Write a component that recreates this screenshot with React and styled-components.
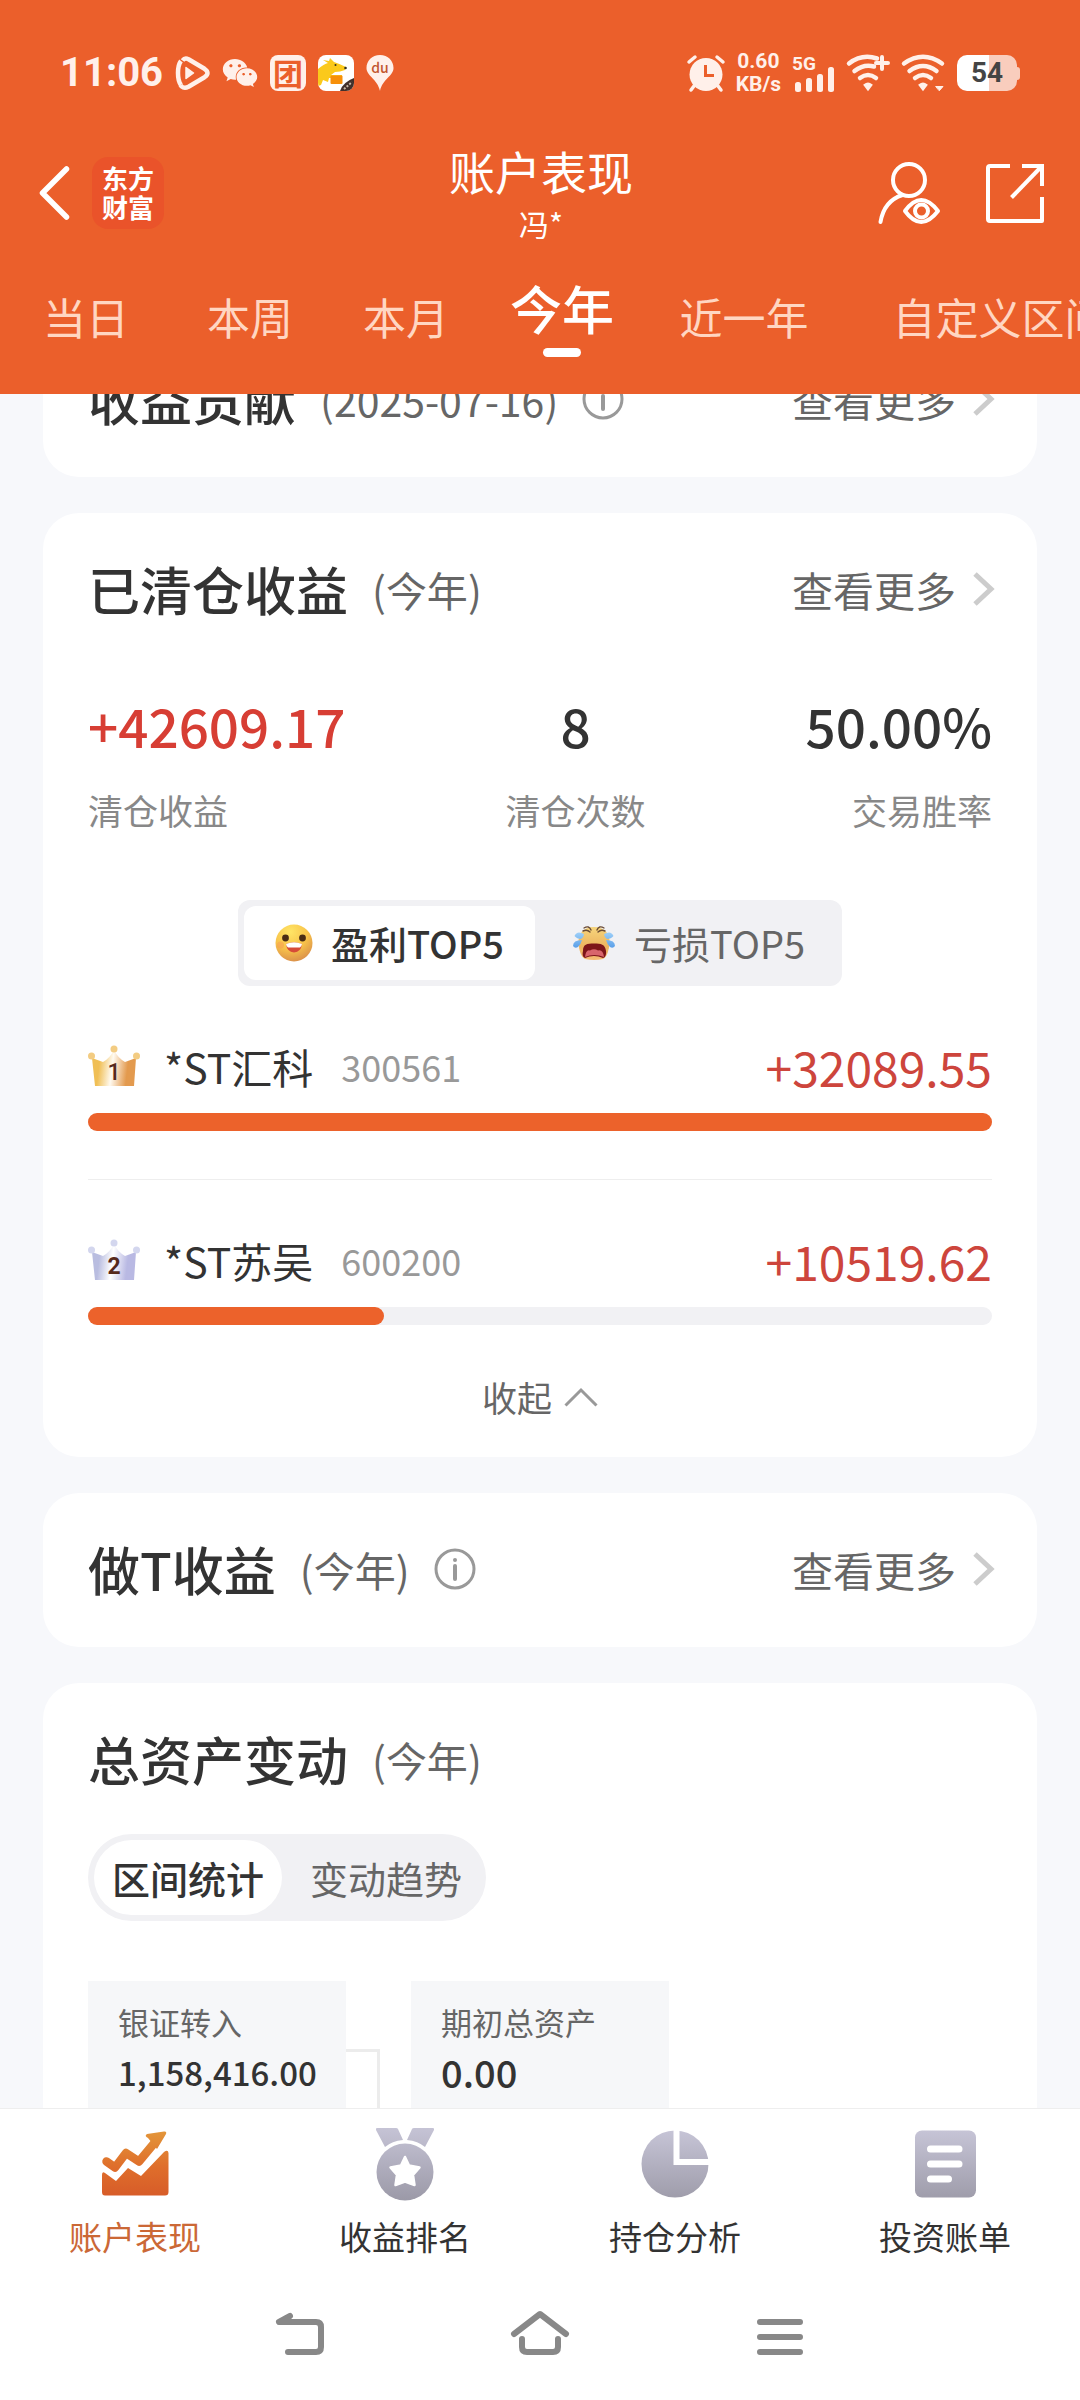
import React, { useState } from "react";
import styled, { createGlobalStyle } from "styled-components";
import { FaWeixin } from "react-icons/fa";

const GlobalStyle = createGlobalStyle`
  * { box-sizing: border-box; }
  body {
    margin: 0;
    background: #f7f8fb;
    color: #333;
    font-family: "Noto Sans CJK SC", "Noto Sans", sans-serif;
  }
  button {
    margin: 0;
    padding: 0;
    border: 0;
    background: none;
    color: inherit;
    font: inherit;
    cursor: pointer;
  }
  a { color: inherit; text-decoration: none; }
  svg { display: block; flex: none; overflow: visible; }
  h1, h2, p, dl, dt, dd, ul, li { margin: 0; padding: 0; font-weight: inherit; list-style: none; }
`;

const NUMERIC = `font-family: Roboto, "Noto Sans CJK SC", sans-serif;`;

const Page = styled.div`
  display: flex;
  flex-direction: column;
  height: 100vh;
`;

/* ---------- header ---------- */

const Header = styled.header`
  flex: none;
  background: #eb5f2b;
  color: #fff;
`;

const StatusBar = styled.div`
  display: flex;
  align-items: center;
  justify-content: space-between;
  height: 138px;
  padding: 8px 60px 0;
  color: #fff0ea;
`;

const StatusGroup = styled.div`
  display: flex;
  align-items: center;
  gap: ${(p) => p.$gap}px;
`;

const Clock = styled.span`
  ${NUMERIC}
  font-size: 40px;
  line-height: 62px;
  font-weight: 700;
`;

const TuanBadge = styled.span`
  width: 36px;
  height: 36px;
  border-radius: 8px;
  background: #fff0ea;
  color: #eb5f2b;
  font-size: 30px;
  line-height: 34px;
  font-weight: 700;
  text-align: center;
`;

const Speed = styled.span`
  ${NUMERIC}
  font-size: 21px;
  line-height: 23px;
  font-weight: 700;
  text-align: center;
`;

const BatteryWrap = styled.span`
  display: flex;
  align-items: center;
`;

const Battery = styled.span`
  ${NUMERIC}
  width: 60px;
  height: 36px;
  border-radius: 10px;
  background: linear-gradient(90deg, #fff 54%, #f9cdbd 54%);
  color: #444;
  font-size: 28px;
  line-height: 36px;
  font-weight: 700;
  text-align: center;
`;

const BatteryCap = styled.span`
  width: 3px;
  height: 13px;
  border-radius: 0 3px 3px 0;
  background: #f9cdbd;
`;

const TitleBar = styled.div`
  display: grid;
  grid-template-columns: 1fr auto 1fr;
  align-items: center;
  height: 110px;
  padding: 0 36px 0 38px;
`;

const TitleSide = styled.div`
  display: flex;
  align-items: center;
  justify-content: ${(p) => (p.$end ? "flex-end" : "flex-start")};
  gap: ${(p) => (p.$end ? 46 : 22)}px;
`;

const Brand = styled.span`
  width: 72px;
  height: 72px;
  padding-top: 6px;
  border-radius: 16px;
  background: #ea532a;
  font-size: 26px;
  line-height: 29px;
  font-weight: 700;
  text-align: center;
`;

const TitleBlock = styled.div`
  text-align: center;
`;

const PageTitle = styled.h1`
  font-size: 46px;
  line-height: 60px;
`;

const Owner = styled.p`
  font-size: 30px;
  line-height: 46px;
`;

const Tabs = styled.nav`
  display: grid;
  grid-template-columns: 172px repeat(3, 156px) 208px 304px;
  align-items: start;
  height: 146px;
  padding-top: 30px;
  overflow: hidden;
`;

const Tab = styled.button`
  display: flex;
  flex-direction: column;
  align-items: center;
  gap: 10px;
  padding-top: ${(p) => (p.$on ? 0 : 8)}px;
  color: ${(p) => (p.$on ? "#fff" : "#ffd6c2")};
  font-size: ${(p) => (p.$on ? 52 : 43)}px;
  line-height: 60px;
  font-weight: ${(p) => (p.$on ? 500 : 400)};
  white-space: nowrap;

  &::after {
    content: "";
    display: ${(p) => (p.$on ? "block" : "none")};
    width: 38px;
    height: 9px;
    border-radius: 5px;
    background: #fff;
  }
`;

/* ---------- cards ---------- */

const Scroller = styled.main`
  flex: 1;
  min-height: 0;
  overflow-y: auto;
  scrollbar-width: none;
`;

const CardList = styled.div`
  display: flex;
  flex-direction: column;
  gap: 36px;
  margin-top: -71px;
  padding: 0 43px 36px;
`;

const Card = styled.section`
  padding: 44px 45px ${(p) => p.$bottom ?? 46}px;
  border-radius: 36px;
  background: #fff;
`;

const CardHead = styled.div`
  display: flex;
  align-items: center;
  justify-content: space-between;
  height: 64px;
`;

const HeadLeft = styled.div`
  display: flex;
  align-items: center;
  gap: 24px;
`;

const CardTitle = styled.h2`
  font-size: 52px;
  line-height: 64px;
  font-weight: 500;
`;

const Period = styled.span`
  color: #666;
  font-size: 41px;
  line-height: 64px;
`;

const MoreLink = styled.a`
  display: flex;
  align-items: center;
  gap: 16px;
  color: #666;
  font-size: 41px;
  line-height: 64px;
`;

const Stats = styled.dl`
  display: flex;
  justify-content: space-between;
  margin-top: 72px;
`;

const Stat = styled.div`
  display: flex;
  flex-direction: column-reverse;
  gap: 29px;
  text-align: ${(p) => p.$align};
`;

const StatLabel = styled.dt`
  color: #888;
  font-size: 35px;
  line-height: 48px;
`;

const StatValue = styled.dd`
  color: ${(p) => (p.$up ? "#d73e34" : "#333")};
  font-size: 53px;
  line-height: 64px;
  font-weight: 500;
`;

const Segment = styled.div`
  display: flex;
  width: fit-content;
  margin: ${(p) => (p.$round ? "43px 0 0" : "66px auto 0")};
  gap: ${(p) => (p.$round ? 10 : 6)}px;
  padding: 6px;
  border-radius: ${(p) => (p.$round ? 44 : 12)}px;
  background: #f1f1f4;
`;

const SegmentButton = styled.button`
  display: flex;
  align-items: center;
  gap: 18px;
  height: ${(p) => (p.$round ? 75 : 74)}px;
  padding: 0 ${(p) => (p.$round ? 18 : 31)}px;
  border-radius: ${(p) => (p.$round ? 38 : 12)}px;
  background: ${(p) => (p.$on ? "#fff" : "transparent")};
  color: ${(p) => (p.$on ? "#333" : "#666")};
  font-size: 38px;
  line-height: 64px;
  font-weight: ${(p) => (p.$on ? 500 : 400)};
`;

const StockRow = styled.li`
  padding: 48px 0;
  border-bottom: 1px solid #eee;

  &:last-child { border-bottom: 0; }
`;

const StockLine = styled.div`
  display: flex;
  align-items: center;
  height: 64px;
`;

const StockName = styled.span`
  margin: 0 28px 0 24px;
  font-size: 41px;
  line-height: 64px;
`;

const StockCode = styled.span`
  color: #999;
  font-size: 36px;
  line-height: 64px;
`;

const StockGain = styled.span`
  margin-left: auto;
  color: #cd453c;
  font-size: 48px;
  line-height: 64px;
`;

const Track = styled.div`
  height: 18px;
  margin-top: 15px;
  border-radius: 9px;
  background: #f1f1f4;
`;

const Fill = styled.div`
  height: 100%;
  border-radius: 9px;
  background: #ec622b;
`;

const Collapse = styled.button`
  display: flex;
  align-items: center;
  gap: 12px;
  margin: 0 auto;
  color: #666;
  font-size: 35px;
  line-height: 48px;
`;

const Flow = styled.div`
  display: grid;
  grid-template-columns: 258px 65px 258px;
  margin-top: 60px;
`;

const FlowBox = styled.dl`
  height: 150px;
  padding: 20px 30px;
  background: #f6f7f9;
`;

const FlowLabel = styled.dt`
  color: #666;
  font-size: 31px;
  line-height: 42px;
`;

const FlowValue = styled.dd`
  font-size: ${(p) => (p.$large ? 38 : 33)}px;
  line-height: 58px;
  font-weight: 500;
`;

const FlowLink = styled.div`
  width: 34px;
  margin-top: 68px;
  border: solid #ececec;
  border-width: 3px 3px 0 0;
`;

/* ---------- bottom bars ---------- */

const Footer = styled.footer`
  flex: none;
  border-top: 1px solid #eee;
  background: #fff;
`;

const BottomNav = styled.nav`
  display: grid;
  grid-template-columns: repeat(4, 1fr);
  padding-top: 18px;
`;

const NavItem = styled.a`
  display: flex;
  flex-direction: column;
  align-items: center;
  gap: 13px;
  color: ${(p) => (p.$on ? "#cb6836" : "#333")};
  font-size: 33px;
  line-height: 44px;
`;

const SystemBar = styled.div`
  display: grid;
  grid-template-columns: repeat(3, 240px);
  justify-content: center;
  padding: 53px 0 43px;
`;

const SystemKey = styled.button`
  display: flex;
  justify-content: center;
  color: #888;
`;

/* ---------- drawings ---------- */

const PlayIcon = () => (
  <svg width="35" height="34" viewBox="0 0 35 34" fill="none" stroke="#fff0ea" strokeWidth="4.5" strokeLinejoin="round">
    <path d="M7.500 4.500C9 2.500 11 2 13.500 3.200L29.500 12.800C33.500 15.500 33.500 18.500 29.500 21.200L13.500 30.800C9 33 6.500 31 5.500 29" />
    <path d="M6 5C2 10 2 24 6 29" />
    <path d="M11 11.500V22.500L18.500 17Z" fill="#fff0ea" strokeWidth="1.500" />
  </svg>
);

const DeliveryIcon = () => (
  <svg width="36" height="36" viewBox="0 0 36 36">
    <defs>
      <clipPath id="deliveryClip"><rect width="36" height="36" rx="8" /></clipPath>
    </defs>
    <g clipPath="url(#deliveryClip)">
      <rect width="36" height="36" fill="#fff" />
      <path d="M0 14Q6 9 10 8L5 5L11 6L12 3L16 7Q22 9 28 12L27 15Q22 17 17 17L13 20H24V23H11L10 27L5 25L3 30L0 31Z" fill="#fbc91b" />
      <rect x="12.500" y="20.500" width="12" height="8.500" rx="1" fill="#f79009" />
      <circle cx="17.500" cy="10" r="1" fill="#332" />
      <circle cx="27.500" cy="13" r="1.300" fill="#332" />
      <path d="M22 36Q25 27 36 23V36Z" fill="#42302a" />
      <path d="M26 34L34 27" stroke="#c9b8a8" strokeWidth="2" strokeDasharray="2 1.500" />
    </g>
  </svg>
);

const PinIcon = () => (
  <svg width="28" height="36" viewBox="0 0 28 36">
    <path d="M14 0C6 0 .5 5.800 .5 13C.5 21 11.500 24 14 36C16.500 24 27.500 21 27.500 13C27.500 5.800 22 0 14 0Z" fill="#fff0ea" />
    <text x="14" y="18" textAnchor="middle" fontSize="14" fontWeight="500" fill="#c1552f">du</text>
  </svg>
);

const AlarmIcon = () => (
  <svg width="38" height="37" viewBox="0 0 38 37" fill="none" strokeLinecap="round">
    <circle cx="19" cy="19.500" r="16.500" fill="#fff0ea" />
    <path d="M2 7L8 2M36 7L30 2M7 31L4 35M31 31L34 35" stroke="#fff0ea" strokeWidth="3.500" />
    <path d="M18.500 10V20.500H27" stroke="#eb5f2b" strokeWidth="3" strokeLinecap="butt" />
  </svg>
);

const SignalIcon = () => (
  <svg width="44" height="40" viewBox="0 0 44 40" fill="#fff0ea">
    <text x="0" y="17" fontSize="19" fontWeight="700" fontFamily="Roboto, sans-serif">5G</text>
    <rect x="3" y="29" width="6" height="10" rx="2.500" />
    <rect x="14" y="25" width="6" height="14" rx="2.500" />
    <rect x="25" y="21" width="6" height="18" rx="2.500" />
    <rect x="36" y="14" width="6" height="25" rx="2.500" />
  </svg>
);

const WifiIcon = ({ plus }) => (
  <svg width="44" height="38" viewBox="1 0 44 38" fill="none" stroke="#fff0ea" strokeWidth="4.500" strokeLinecap="round">
    <path d={plus ? "M3 9.500Q16 -.5 31 4.500" : "M3 9.500Q22 -4 41 9.500"} />
    <path d={plus ? "M8.500 17Q18 9.500 28 12.500" : "M8.500 17Q22 7 35.500 17"} />
    <path d="M14 24Q22 18 30 24" />
    <path d="M18.500 31Q22 28 25.500 31L22 35.500Z" fill="#fff0ea" strokeWidth="2" />
    {plus ? <path d="M36 3V15M30 9H42" strokeWidth="4" /> : <path d="M35 32.500H42L38.500 36.500Z" fill="#fff0ea" strokeWidth="1" />}
  </svg>
);

const BackIcon = () => (
  <svg width="32" height="56" viewBox="0 0 32 56" fill="none" stroke="#fff" strokeWidth="5.500" strokeLinecap="round" strokeLinejoin="round">
    <path d="M28.500 4L4.500 28L28.500 52" />
  </svg>
);

const UserIcon = () => (
  <svg width="62" height="62" viewBox="0 0 62 62" fill="none" stroke="#fff" strokeWidth="4" strokeLinecap="round" strokeLinejoin="round">
    <circle cx="31" cy="18" r="16" />
    <path d="M2.500 60C5 45 12 37 24.500 33" />
    <path d="M27 49Q43 27 60 49Q43 71 27 49Z" />
    <circle cx="43.500" cy="49" r="6.500" />
  </svg>
);

const ShareIcon = () => (
  <svg width="58" height="60" viewBox="0 0 58 60" fill="none" stroke="#fff" strokeWidth="4" strokeLinejoin="round">
    <path d="M24 3H4Q2 3 2 5V56Q2 58 4 58H56V34" />
    <path d="M36 3H56V23" strokeLinejoin="miter" />
    <path d="M55 4L25.500 34.500" />
  </svg>
);

const InfoIcon = () => (
  <svg width="42" height="42" viewBox="0 0 42 42" fill="none" stroke="#999" strokeWidth="3">
    <circle cx="21" cy="21" r="19" />
    <path d="M21 18V31" strokeWidth="4" strokeLinecap="round" />
    <circle cx="21" cy="12" r="2" fill="#999" stroke="none" />
  </svg>
);

const ChevronIcon = () => (
  <svg width="20" height="36" viewBox="0 0 20 36" fill="none" stroke="#ccc" strokeWidth="5">
    <path d="M3 3L19 18L3 33" />
  </svg>
);

const UpIcon = () => (
  <svg width="34" height="20" viewBox="0 0 34 20" fill="none" stroke="#999" strokeWidth="3">
    <path d="M1.500 18.500L17 3L32.500 18.500" />
  </svg>
);

const HappyFace = () => (
  <svg width="38" height="38" viewBox="0 0 38 38">
    <defs>
      <radialGradient id="happySkin" cx=".4" cy=".2" r=".85">
        <stop offset="0" stopColor="#ffe566" />
        <stop offset=".55" stopColor="#f8c34a" />
        <stop offset="1" stopColor="#d88c4a" />
      </radialGradient>
    </defs>
    <circle cx="19" cy="19" r="18.500" fill="url(#happySkin)" />
    <circle cx="10.500" cy="14" r="3.400" fill="#4a2c14" />
    <circle cx="27.500" cy="14" r="3.400" fill="#4a2c14" />
    <circle cx="5.500" cy="21" r="3.500" fill="#f79a55" opacity=".5" />
    <path d="M11 20Q19 16.500 27 20Q26 28 19 28.500Q12 28 11 20Z" fill="#d64b38" />
    <path d="M11 20Q19 16.500 27 20Q26.500 23 25 23.500H13Q11.500 23 11 20Z" fill="#fff" />
  </svg>
);

const CryFace = () => (
  <svg width="44" height="36" viewBox="0 0 44 36">
    <defs>
      <linearGradient id="crySkin" x1="0" y1="0" x2="0" y2="1">
        <stop offset="0" stopColor="#f6d57c" />
        <stop offset=".6" stopColor="#edb45f" />
        <stop offset="1" stopColor="#f6bb75" />
      </linearGradient>
      <linearGradient id="tear" x1="0" y1="0" x2="0" y2="1">
        <stop offset="0" stopColor="#9fd0f8" />
        <stop offset="1" stopColor="#5a9fe8" />
      </linearGradient>
    </defs>
    <path d="M22 2C33 2 38 9 37.500 18C37 25 35 32 31 34Q22 36 13 34C9 32 7 25 6.500 18C6 9 11 2 22 2Z" fill="url(#crySkin)" />
    <path d="M11 26C11 19 15 18.500 22 18.500S33 19 34 26C34.500 30 33 33 31 33Q22 29 13 33C11 32 10 30 11 26Z" fill="#7d1519" />
    <path d="M13 32Q14 24 18 25.500Q22 23 26 25.500Q31 24 32 32Q22 28 13 32Z" fill="#d9656c" />
    <path d="M12 3Q17 0 19 5M11 6Q15 4 18 7M32 3Q27 0 25 5M33 6Q29 4 26 7" fill="none" stroke="#6b4c35" strokeWidth="1.400" strokeLinecap="round" />
    <path d="M12 9Q5 5 2.500 11Q5 14 9 14Q12 12 12 9ZM10 15Q1 15 1 21Q3 24 6 22Q9 19 10 15Z" fill="url(#tear)" />
    <path d="M32 9Q39 5 41.500 11Q39 14 35 14Q32 12 32 9ZM34 15Q43 15 43 21Q41 24 38 22Q35 19 34 15Z" fill="url(#tear)" />
  </svg>
);

const CROWNS = {
  1: { edge: "#f0bf55", mid: "#fffaf0", end: "#e39a4e", ball: "#f3cc82", weight: 500 },
  2: { edge: "#b9bde0", mid: "#ffffff", end: "#b9b9e3", ball: "#d3d6ee", weight: 700 },
};

const Crown = ({ rank }) => {
  const c = CROWNS[rank];
  return (
    <svg width="52" height="42" viewBox="0 0 52 42">
      <defs>
        <linearGradient id={`crown${rank}`} x1="0" y1="0" x2="1" y2=".1">
          <stop offset="0" stopColor={c.edge} />
          <stop offset=".2" stopColor={c.edge} />
          <stop offset=".5" stopColor={c.mid} />
          <stop offset=".85" stopColor={c.end} />
          <stop offset="1" stopColor={c.end} />
        </linearGradient>
      </defs>
      <path d="M4 13L15 17Q22 13 26 5Q30 13 37 17L48 13L46 41H7Z" fill={`url(#crown${rank})`} />
      <circle cx="26" cy="4" r="3.500" fill={c.ball} />
      <circle cx="3.500" cy="11" r="3.500" fill={c.ball} />
      <circle cx="48.500" cy="11" r="3.500" fill={c.ball} />
      <text x="26" y="35" textAnchor="middle" fontSize="23" fontWeight={c.weight} fontFamily="Roboto, sans-serif" fill="#56291c">{rank}</text>
    </svg>
  );
};

const GrayDefs = ({ id }) => (
  <defs>
    <linearGradient id={id} x1="0" y1="0" x2="0" y2="1">
      <stop offset="0" stopColor="#c6c4d6" />
      <stop offset="1" stopColor="#9f9dab" />
    </linearGradient>
  </defs>
);

const ChartIcon = () => (
  <svg width="74" height="74" viewBox="0 0 74 74">
    <defs>
      <linearGradient id="chartFill" gradientUnits="userSpaceOnUse" x1="0" y1="4" x2="0" y2="69">
        <stop offset="0" stopColor="#e3963a" />
        <stop offset=".55" stopColor="#df6e2b" />
        <stop offset="1" stopColor="#d75c29" />
      </linearGradient>
    </defs>
    <path d="M4 48Q4 44 7 46L18 54L30 41L43 49L66 25Q70 22 70.500 26V65Q70.500 68.500 67 68.500H7Q4 68.500 4 65Z" fill="url(#chartFill)" />
    <path d="M8.500 34.500L17 40.500L28 26L41 34.500L58 14" fill="none" stroke="url(#chartFill)" strokeWidth="8.500" strokeLinecap="round" strokeLinejoin="round" />
    <path d="M49 7L66 4.500Q69 4 68 7L59 22L50 11Q46 9 49 7Z" fill="url(#chartFill)" />
  </svg>
);

const MedalIcon = () => (
  <svg width="74" height="74" viewBox="0 0 74 74" fill="url(#medalFill)">
    <defs>
      <linearGradient id="medalFill" gradientUnits="userSpaceOnUse" x1="0" y1="0" x2="0" y2="74">
        <stop offset="0" stopColor="#c6c4d6" />
        <stop offset="1" stopColor="#9b99a7" />
      </linearGradient>
    </defs>
    <path d="M9 1H28Q29.500 1 30 2L35 13Q24 14 17 20L8 3Q7.500 1 9 1ZM65 1H46Q44.500 1 44 2L39 13Q50 14 57 20L66 3Q66.500 1 65 1Z" />
    <circle cx="37" cy="45" r="28.500" />
    <path d="M37 30L41 38.500L51.500 40.500L45 48L46.500 58L37 54.500L27.500 58L29 48L22.500 40.500L33 38.500Z" fill="#fff" stroke="#fff" strokeWidth="2.500" strokeLinejoin="round" />
  </svg>
);

const PieIcon = () => (
  <svg width="74" height="74" viewBox="0 0 74 74">
    <GrayDefs id="pieFill" />
    <circle cx="37" cy="37" r="33.500" fill="url(#pieFill)" />
    <path d="M38.500 0V35H74" fill="none" stroke="#fff" strokeWidth="6" />
  </svg>
);

const BillIcon = () => (
  <svg width="74" height="74" viewBox="0 0 74 74">
    <GrayDefs id="billFill" />
    <rect x="7" y="3.500" width="61" height="67" rx="7" fill="url(#billFill)" />
    <path d="M22.500 22H51M22.500 37H51M22.500 52H40.500" stroke="#fff" strokeWidth="7" strokeLinecap="round" />
  </svg>
);

const KeyIcon = ({ children }) => (
  <svg width="60" height="46" viewBox="0 0 60 46" fill="none" stroke="currentColor" strokeWidth="6" strokeLinecap="round" strokeLinejoin="round">
    {children}
  </svg>
);

/* ---------- content ---------- */

const PERIODS = ["当日", "本周", "本月", "今年", "近一年", "自定义区间"];

const STOCKS = [
  { rank: 1, name: "*ST汇科", code: "300561", gain: 32089.55 },
  { rank: 2, name: "*ST苏吴", code: "600200", gain: 10519.62 },
];

const NAV = [
  { label: "账户表现", Icon: ChartIcon },
  { label: "收益排名", Icon: MedalIcon },
  { label: "持仓分析", Icon: PieIcon },
  { label: "投资账单", Icon: BillIcon },
];

const Head = ({ title, period, info, more }) => (
  <CardHead>
    <HeadLeft>
      <CardTitle>{title}</CardTitle>
      <Period>({period})</Period>
      {info && <button aria-label={`${title}说明`}><InfoIcon /></button>}
    </HeadLeft>
    {more && <MoreLink href="#more">查看更多<ChevronIcon /></MoreLink>}
  </CardHead>
);

export default function App() {
  const [period, setPeriod] = useState("今年");
  const [top, setTop] = useState("win");
  const [view, setView] = useState("stat");
  const best = STOCKS[0].gain;

  return (
    <Page>
      <GlobalStyle />
      <Header>
        <StatusBar>
          <StatusGroup $gap={12}>
            <Clock>11:06</Clock>
            <PlayIcon />
            <FaWeixin size={36} />
            <TuanBadge>团</TuanBadge>
            <DeliveryIcon />
            <PinIcon />
          </StatusGroup>
          <StatusGroup $gap={11}>
            <AlarmIcon />
            <Speed>0.60<br />KB/s</Speed>
            <SignalIcon />
            <WifiIcon plus />
            <WifiIcon />
            <BatteryWrap><Battery>54</Battery><BatteryCap /></BatteryWrap>
          </StatusGroup>
        </StatusBar>
        <TitleBar>
          <TitleSide>
            <button aria-label="返回"><BackIcon /></button>
            <Brand>东方<br />财富</Brand>
          </TitleSide>
          <TitleBlock>
            <PageTitle>账户表现</PageTitle>
            <Owner>冯*</Owner>
          </TitleBlock>
          <TitleSide $end>
            <button aria-label="账户"><UserIcon /></button>
            <button aria-label="分享"><ShareIcon /></button>
          </TitleSide>
        </TitleBar>
        <Tabs>
          {PERIODS.map((p) => (
            <Tab key={p} $on={p === period} onClick={() => setPeriod(p)}>{p}</Tab>
          ))}
        </Tabs>
      </Header>

      <Scroller>
        <CardList>
          <Card>
            <Head title="收益贡献" period="2025-07-16" info more />
          </Card>

          <Card $bottom={36}>
            <Head title="已清仓收益" period="今年" more />
            <Stats>
              <Stat $align="left">
                <StatLabel>清仓收益</StatLabel>
                <StatValue $up>+42609.17</StatValue>
              </Stat>
              <Stat $align="center">
                <StatLabel>清仓次数</StatLabel>
                <StatValue>8</StatValue>
              </Stat>
              <Stat $align="right">
                <StatLabel>交易胜率</StatLabel>
                <StatValue>50.00%</StatValue>
              </Stat>
            </Stats>
            <Segment>
              <SegmentButton $on={top === "win"} onClick={() => setTop("win")}>
                <HappyFace />盈利TOP5
              </SegmentButton>
              <SegmentButton $on={top === "loss"} onClick={() => setTop("loss")}>
                <CryFace />亏损TOP5
              </SegmentButton>
            </Segment>
            <ul>
              {STOCKS.map((s) => (
                <StockRow key={s.code}>
                  <StockLine>
                    <Crown rank={s.rank} />
                    <StockName>{s.name}</StockName>
                    <StockCode>{s.code}</StockCode>
                    <StockGain>+{s.gain.toFixed(2)}</StockGain>
                  </StockLine>
                  <Track>
                    <Fill style={{ width: `${(s.gain / best) * 100}%` }} />
                  </Track>
                </StockRow>
              ))}
            </ul>
            <Collapse>收起<UpIcon /></Collapse>
          </Card>

          <Card>
            <Head title="做T收益" period="今年" info more />
          </Card>

          <Card>
            <Head title="总资产变动" period="今年" />
            <Segment $round>
              <SegmentButton $round $on={view === "stat"} onClick={() => setView("stat")}>区间统计</SegmentButton>
              <SegmentButton $round $on={view === "trend"} onClick={() => setView("trend")}>变动趋势</SegmentButton>
            </Segment>
            <Flow>
              <FlowBox>
                <FlowLabel>银证转入</FlowLabel>
                <FlowValue>1,158,416.00</FlowValue>
              </FlowBox>
              <FlowLink />
              <FlowBox>
                <FlowLabel>期初总资产</FlowLabel>
                <FlowValue $large>0.00</FlowValue>
              </FlowBox>
            </Flow>
          </Card>
        </CardList>
      </Scroller>

      <Footer>
        <BottomNav>
          {NAV.map(({ label, Icon }, i) => (
            <NavItem key={label} href="#nav" $on={i === 0}><Icon />{label}</NavItem>
          ))}
        </BottomNav>
        <SystemBar>
          <SystemKey aria-label="后退">
            <KeyIcon><path d="M20 5L9 11H46Q51 11 51 16V36Q51 41 46 41H18" /></KeyIcon>
          </SystemKey>
          <SystemKey aria-label="主页">
            <KeyIcon><path d="M4 23L30 3L56 23M12 28V36Q12 41 17 41H43Q48 41 48 36V28" /></KeyIcon>
          </SystemKey>
          <SystemKey aria-label="任务">
            <KeyIcon><path d="M10 11H50M10 26H50M10 41H50" /></KeyIcon>
          </SystemKey>
        </SystemBar>
      </Footer>
    </Page>
  );
}
